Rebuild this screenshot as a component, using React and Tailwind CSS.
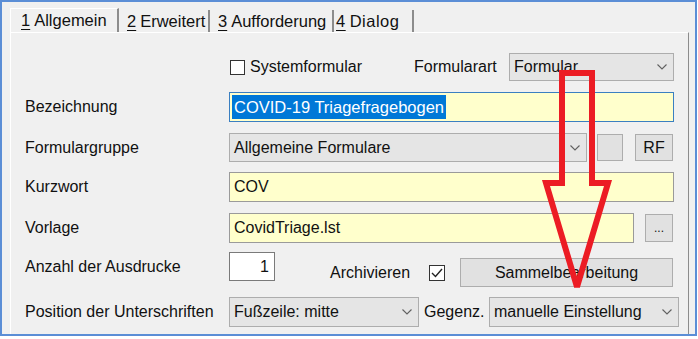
import React from 'react'

function Chevron() {
  return (
    <svg width="10" height="6" viewBox="0 0 10 6" className="shrink-0">
      <path d="M0.5 0.5L5 5L9.5 0.5" fill="none" stroke="#606060" strokeWidth="1.1" />
    </svg>
  )
}

function Combo({ value, className }) {
  return (
    <div className={`flex items-center justify-between border border-[#adadad] bg-[#e5e5e5] pl-[4px] pr-[6px] ${className}`}>
      <span className="whitespace-nowrap">{value}</span>
      <Chevron />
    </div>
  )
}

function Field({ value, className }) {
  return (
    <div className={`flex items-center border border-[#9a9a9a] bg-[#ffffcc] pl-[4px] whitespace-nowrap ${className}`}>
      {value}
    </div>
  )
}

function Button({ children, className }) {
  return (
    <div className={`flex items-center justify-center border border-[#adadad] bg-[#e1e1e1] ${className}`}>
      {children}
    </div>
  )
}

function Label({ children }) {
  return <div className="w-[204px] shrink-0 whitespace-nowrap">{children}</div>
}

function Tab({ num, label, className, active }) {
  return (
    <div
      className={`flex items-center whitespace-nowrap border-r-2 border-r-[#8c8c8c] ${
        active ? 'h-[24px] border-l border-t border-l-white border-t-white' : 'h-[22px]'
      } ${className}`}
    >
      <span className="underline underline-offset-[3px] decoration-1">{num}</span>
      <span className="ml-[4px]">{label}</span>
    </div>
  )
}

export default function App() {
  return (
    <div className="w-[698px] h-[339px] bg-white font-['Liberation_Sans',Arial,sans-serif] text-[16px] text-[#111]">
      <div className="relative flex flex-col w-[697px] h-[336px] border-2 border-[#5b8ed6] bg-[#f0f0f0] overflow-hidden">
        {/* tab strip */}
        <div className="flex items-end h-[30px] pl-[8px] shrink-0 text-[16.5px]">
          <Tab num="1" label="Allgemein" active className="w-[109px] pl-[10px]" />
          <Tab num="2" label="Erweitert" className="w-[91px] pl-[8px]" />
          <Tab num="3" label="Aufforderung" className="w-[124px] pl-[8px]" />
          <Tab num="4" label="Dialog" className="w-[80px] pl-[2px] tracking-[0.5px]" />
        </div>

        {/* panel */}
        <div className="flex flex-col flex-1 ml-[8px] mr-[6px] border-l border-t border-white border-r border-r-[#8c8c8c] pl-[14px] pt-[20px]">
          <div className="flex items-center h-[28px]">
            <div className="w-[204px] shrink-0" />
            <div className="flex items-center w-[185px] pl-[1px]">
              <div className="w-[15px] h-[15px] border border-[#333] bg-white" />
              <span className="ml-[5px]">Systemformular</span>
            </div>
            <div className="w-[95px]">Formularart</div>
            <Combo value="Formular" className="w-[165px] h-[28px]" />
          </div>

          <div className="flex items-center h-[30px] mt-[11px]">
            <Label>Bezeichnung</Label>
            <div className="flex items-center w-[445px] h-[30px] border border-[#3a7fc1] bg-[#ffffcc] pl-[2px]">
              <span className="bg-[#0078d7] text-white px-[2px] whitespace-nowrap text-[16.5px]">COVID-19 Triagefragebogen</span>
            </div>
          </div>

          <div className="flex items-center h-[29px] mt-[11px]">
            <Label>Formulargruppe</Label>
            <Combo value="Allgemeine Formulare" className="w-[358px] h-[29px]" />
            <Button className="w-[26px] h-[27px] ml-[10px]" />
            <Button className="w-[38px] h-[27px] ml-[12px]">RF</Button>
          </div>

          <div className="flex items-center h-[30px] mt-[10px]">
            <Label>Kurzwort</Label>
            <Field value="COV" className="w-[445px] h-[30px]" />
          </div>

          <div className="flex items-center h-[30px] mt-[11px]">
            <Label>Vorlage</Label>
            <Field value="CovidTriage.lst" className="w-[405px] h-[30px]" />
            <Button className="w-[28px] h-[28px] ml-[11px] text-[12px]">...</Button>
          </div>

          <div className="flex items-start h-[35px] mt-[9px]">
            <div className="flex items-center w-[204px] h-[29px] shrink-0">Anzahl der Ausdrucke</div>
            <div className="flex items-center justify-end w-[46px] h-[29px] border border-[#7a7a7a] bg-white pr-[5px]">1</div>
            <div className="flex items-center h-[29px] mt-[6px] ml-[55px]">
              <span className="w-[99px]">Archivieren</span>
              <div className="flex items-center justify-center w-[16px] h-[16px] border border-[#333] bg-white">
                <svg width="12" height="10" viewBox="0 0 12 10">
                  <path d="M1 5L4.5 8.5L11 1" fill="none" stroke="#222" strokeWidth="1.4" />
                </svg>
              </div>
              <Button className="w-[213px] h-[29px] ml-[15px]">Sammelbearbeitung</Button>
            </div>
          </div>

          <div className="flex items-center h-[30px] mt-[10px]">
            <Label>Position der Unterschriften</Label>
            <Combo value="Fußzeile: mitte" className="w-[190px] h-[30px]" />
            <span className="w-[70px] pl-[5px]">Gegenz.</span>
            <Combo value="manuelle Einstellung" className="w-[190px] h-[30px]" />
          </div>
        </div>

        {/* red arrow annotation */}
        <svg
          className="absolute left-[-2px] top-[-2px] pointer-events-none"
          width="698"
          height="339"
          viewBox="0 0 698 339"
        >
          <polygon
            points="562,73 592,73 592,183 608,183 577,287 546,183 562,183"
            fill="none"
            stroke="#ec1c24"
            strokeWidth="6"
            strokeLinejoin="miter"
            strokeMiterlimit="2"
          />
        </svg>
      </div>
    </div>
  )
}
